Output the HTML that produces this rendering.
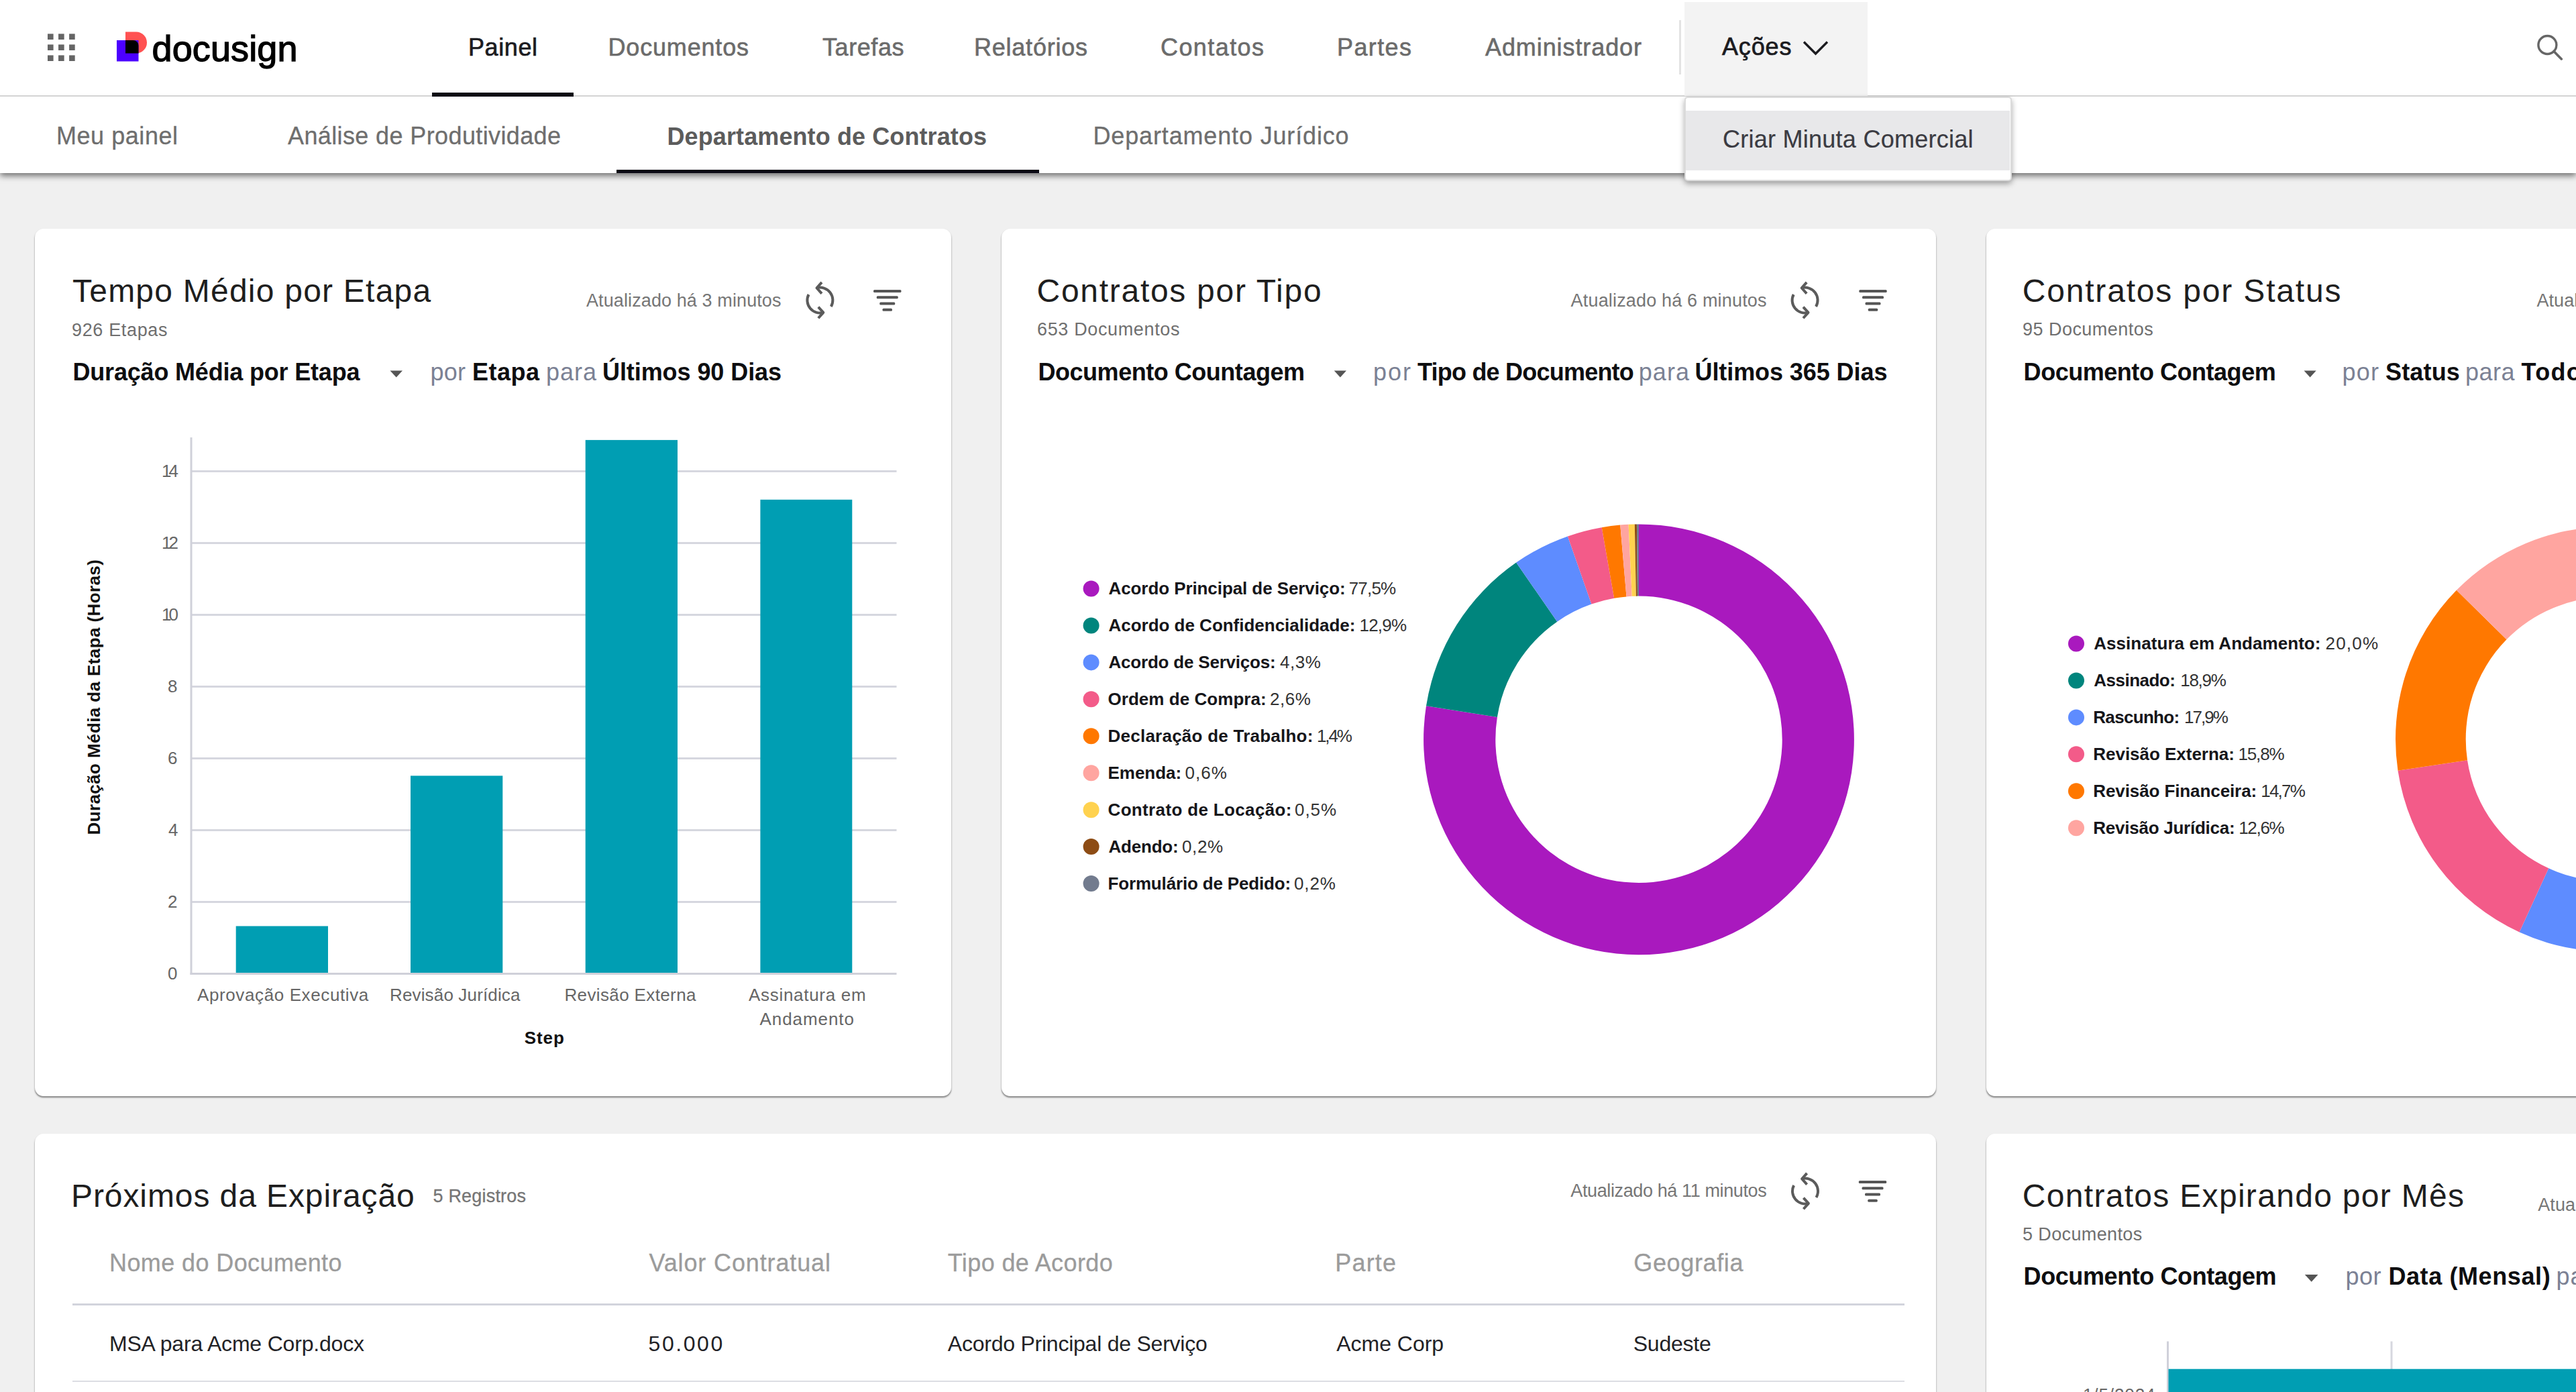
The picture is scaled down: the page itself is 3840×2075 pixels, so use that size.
<!DOCTYPE html>
<html><head><meta charset="utf-8"><title>Painel</title>
<style>
html,body{margin:0;padding:0;}
body{width:3840px;height:2075px;overflow:hidden;background:#f0f0f0;position:relative;font-family:"Liberation Sans",sans-serif;}
.t{position:absolute;white-space:nowrap;line-height:1;}
.abs{position:absolute;}
.card{position:absolute;background:#fff;border-radius:13px;box-shadow:0 2.5px 1.5px -0.5px rgba(0,0,0,.31),0 2px 2px 1px rgba(0,0,0,.13);}
</style></head><body>
<!-- top nav -->
<div class="abs" style="left:0;top:0;width:3840px;height:258px;background:#fff;box-shadow:0 4px 9px rgba(0,0,0,.55);"></div>
<div class="abs" style="left:0;top:142px;width:3840px;height:2px;background:#d4d4d4;"></div>
<div class="abs" style="left:2511px;top:3px;width:273px;height:139.5px;background:#f3f3f3;"></div>
<div class="abs" style="left:2503px;top:30px;width:3px;height:81px;background:#e3e3e3;"></div>
<div class="abs" style="left:644px;top:138px;width:211px;height:6px;background:#0a0914;"></div>
<div class="abs" style="left:919px;top:253px;width:629.5px;height:5px;background:#0a0914;"></div>
<!-- cards -->
<div class="card" style="left:52px;top:340.5px;width:1366px;height:1293px;"></div>
<div class="card" style="left:1492.5px;top:340.5px;width:1393.5px;height:1293px;"></div>
<div class="card" style="left:2960.5px;top:340.5px;width:1393.5px;height:1293px;"></div>
<div class="card" style="left:52px;top:1689.5px;width:2834px;height:600px;"></div>
<div class="card" style="left:2960.5px;top:1689.5px;width:1393.5px;height:600px;"></div>
<!-- dropdown -->
<div class="abs" style="left:2510.5px;top:143.5px;width:484px;height:122.5px;background:#fff;border:2.5px solid #dbdbdb;border-radius:5px;box-shadow:0 4px 8px rgba(0,0,0,.34);"></div>
<div class="abs" style="left:2513px;top:165px;width:483px;height:89px;background:#e8e8ea;"></div>
<!-- table lines -->
<div class="abs" style="left:108px;top:1943px;width:2731px;height:3px;background:#d2d4dc;"></div>
<div class="abs" style="left:108px;top:2058px;width:2731px;height:2px;background:#dcdde3;"></div>
<svg class="abs" style="left:0;top:0" width="3840" height="2075" viewBox="0 0 3840 2075">
<!-- app grid icon -->
<g fill="#656565"><rect x="71.00" y="50.40" width="8.6" height="8.6"/><rect x="71.00" y="66.40" width="8.6" height="8.6"/><rect x="71.00" y="82.40" width="8.6" height="8.6"/><rect x="87.05" y="50.40" width="8.6" height="8.6"/><rect x="87.05" y="66.40" width="8.6" height="8.6"/><rect x="87.05" y="82.40" width="8.6" height="8.6"/><rect x="103.10" y="50.40" width="8.6" height="8.6"/><rect x="103.10" y="66.40" width="8.6" height="8.6"/><rect x="103.10" y="82.40" width="8.6" height="8.6"/></g>
<!-- logo mark -->
<path d="M187,47.5H203A16,16 0 0 1 219,63.5V63.5A16,16 0 0 1 203,79.5H187Z" fill="#ff5252"/>
<rect x="174" y="60" width="32.5" height="31.5" fill="#4c00ff"/>
<path d="M187,60H198.5A8,8 0 0 1 206.5,68V79.5H187Z" fill="#000"/>
<!-- chevron -->
<path d="M2689,62.5L2706.5,80L2724,62.5" fill="none" stroke="#1b1b1f" stroke-width="3.4"/>
<!-- search -->
<circle cx="3797.4" cy="67" r="13.5" fill="none" stroke="#666" stroke-width="3.4"/><path d="M3807,76.6L3818.3,87.9" stroke="#666" stroke-width="3.6" stroke-linecap="round" fill="none"/>
<rect x="285" y="1343.0" width="1051.5" height="3" fill="#d6d7df"/><rect x="285" y="1236.0" width="1051.5" height="3" fill="#d6d7df"/><rect x="285" y="1129.0" width="1051.5" height="3" fill="#d6d7df"/><rect x="285" y="1022.0" width="1051.5" height="3" fill="#d6d7df"/><rect x="285" y="915.0" width="1051.5" height="3" fill="#d6d7df"/><rect x="285" y="808.0" width="1051.5" height="3" fill="#d6d7df"/><rect x="285" y="701.0" width="1051.5" height="3" fill="#d6d7df"/><rect x="283.5" y="652" width="3" height="801.0" fill="#d0d1da"/><rect x="283.5" y="1450.0" width="1053" height="3" fill="#cfd0d9"/><rect x="351.7" y="1380.5" width="137.3" height="69.5" fill="#009eb3"/><rect x="612" y="1156.4" width="137.3" height="293.6" fill="#009eb3"/><rect x="872.7" y="655.9" width="137.3" height="794.1" fill="#009eb3"/><rect x="1133.4" y="744.8" width="136.9" height="705.2" fill="#009eb3"/>
<path d="M2443.00,781.40A320.9,320.9 0 1 1 2126.01,1052.33L2231.91,1069.02A213.7,213.7 0 1 0 2443.00,888.60Z" fill="#a919be"/><path d="M2126.01,1052.33A320.9,320.9 0 0 1 2260.17,838.58L2321.25,926.68A213.7,213.7 0 0 0 2231.91,1069.02Z" fill="#00857d"/><path d="M2260.17,838.58A320.9,320.9 0 0 1 2336.96,799.43L2372.38,900.60A213.7,213.7 0 0 0 2321.25,926.68Z" fill="#5e8cff"/><path d="M2336.96,799.43A320.9,320.9 0 0 1 2387.70,786.20L2406.17,891.80A213.7,213.7 0 0 0 2372.38,900.60Z" fill="#f35b89"/><path d="M2387.70,786.20A320.9,320.9 0 0 1 2415.25,782.60L2424.52,889.40A213.7,213.7 0 0 0 2406.17,891.80Z" fill="#ff7800"/><path d="M2415.25,782.60A320.9,320.9 0 0 1 2427.57,781.77L2432.72,888.85A213.7,213.7 0 0 0 2424.52,889.40Z" fill="#ffa5a0"/><path d="M2427.57,781.77A320.9,320.9 0 0 1 2436.82,781.46L2438.89,888.64A213.7,213.7 0 0 0 2432.72,888.85Z" fill="#ffd24f"/><path d="M2436.82,781.46A320.9,320.9 0 0 1 2439.91,781.41L2440.94,888.61A213.7,213.7 0 0 0 2438.89,888.64Z" fill="#8d4c14"/><path d="M2439.91,781.41A320.9,320.9 0 0 1 2443.00,781.40L2443.00,888.60A213.7,213.7 0 0 0 2440.94,888.61Z" fill="#727b8e"/><circle cx="1626.6" cy="877.50" r="12" fill="#a919be"/><circle cx="1626.6" cy="932.44" r="12" fill="#00857d"/><circle cx="1626.6" cy="987.38" r="12" fill="#5e8cff"/><circle cx="1626.6" cy="1042.32" r="12" fill="#f35b89"/><circle cx="1626.6" cy="1097.26" r="12" fill="#ff7800"/><circle cx="1626.6" cy="1152.20" r="12" fill="#ffa5a0"/><circle cx="1626.6" cy="1207.14" r="12" fill="#ffd24f"/><circle cx="1626.6" cy="1262.08" r="12" fill="#8d4c14"/><circle cx="1626.6" cy="1317.02" r="12" fill="#727b8e"/>
<path d="M3887.50,785.30A316.5,316.5 0 0 1 4188.51,1004.00L4088.93,1036.35A211.8,211.8 0 0 0 3887.50,890.00Z" fill="#a919be"/><path d="M4188.51,1004.00A316.5,316.5 0 0 1 4090.05,1345.00L4023.05,1264.55A211.8,211.8 0 0 0 4088.93,1036.35Z" fill="#00857d"/><path d="M4090.05,1345.00A316.5,316.5 0 0 1 3755.59,1389.50L3799.23,1294.33A211.8,211.8 0 0 0 4023.05,1264.55Z" fill="#5e8cff"/><path d="M3755.59,1389.50A316.5,316.5 0 0 1 3574.50,1148.73L3678.04,1133.20A211.8,211.8 0 0 0 3799.23,1294.33Z" fill="#f35b89"/><path d="M3574.50,1148.73A316.5,316.5 0 0 1 3661.86,879.86L3736.50,953.28A211.8,211.8 0 0 0 3678.04,1133.20Z" fill="#ff7800"/><path d="M3661.86,879.86A316.5,316.5 0 0 1 3887.50,785.30L3887.50,890.00A211.8,211.8 0 0 0 3736.50,953.28Z" fill="#ffa5a0"/><circle cx="3095" cy="959.50" r="12" fill="#a919be"/><circle cx="3095" cy="1014.44" r="12" fill="#00857d"/><circle cx="3095" cy="1069.38" r="12" fill="#5e8cff"/><circle cx="3095" cy="1124.32" r="12" fill="#f35b89"/><circle cx="3095" cy="1179.26" r="12" fill="#ff7800"/><circle cx="3095" cy="1234.20" r="12" fill="#ffa5a0"/>
<rect x="3230" y="1999.5" width="3" height="100" fill="#d0d1da"/><rect x="3563.5" y="1999.5" width="3" height="100" fill="#d6d7df"/><rect x="3232.5" y="2040.7" width="700" height="60" fill="#009eb3"/>
<g fill="none" stroke="#5b5b5b" stroke-width="4" stroke-linecap="butt" stroke-linejoin="round"><path d="M1238.85,457.10A19,19 0 0 0 1217.48,429.25" /><path d="M1224.98,420.95L1217.48,429.25L1224.98,437.55"/><path d="M1205.47,438.97A19,19 0 0 0 1227.32,465.95" /><path d="M1219.82,457.65L1227.32,465.95L1219.82,474.25"/></g><rect x="1302.05" y="432.00" width="41.40" height="4" rx="1.5" fill="#555"/><rect x="1306.75" y="441.25" width="32.00" height="4" rx="1.5" fill="#555"/><rect x="1311.25" y="450.50" width="23.00" height="4" rx="1.5" fill="#555"/><rect x="1315.55" y="459.75" width="14.40" height="4" rx="1.5" fill="#555"/><g fill="none" stroke="#5b5b5b" stroke-width="4" stroke-linecap="butt" stroke-linejoin="round"><path d="M2707.05,457.10A19,19 0 0 0 2685.68,429.25" /><path d="M2693.18,420.95L2685.68,429.25L2693.18,437.55"/><path d="M2673.67,438.97A19,19 0 0 0 2695.52,465.95" /><path d="M2688.02,457.65L2695.52,465.95L2688.02,474.25"/></g><rect x="2771.30" y="432.00" width="41.40" height="4" rx="1.5" fill="#555"/><rect x="2776.00" y="441.25" width="32.00" height="4" rx="1.5" fill="#555"/><rect x="2780.50" y="450.50" width="23.00" height="4" rx="1.5" fill="#555"/><rect x="2784.80" y="459.75" width="14.40" height="4" rx="1.5" fill="#555"/><g fill="none" stroke="#5b5b5b" stroke-width="4" stroke-linecap="butt" stroke-linejoin="round"><path d="M2707.45,1785.10A19,19 0 0 0 2686.08,1757.25" /><path d="M2693.58,1748.95L2686.08,1757.25L2693.58,1765.55"/><path d="M2674.07,1766.97A19,19 0 0 0 2695.92,1793.95" /><path d="M2688.42,1785.65L2695.92,1793.95L2688.42,1802.25"/></g><rect x="2770.80" y="1759.90" width="41.40" height="4" rx="1.5" fill="#555"/><rect x="2775.50" y="1769.15" width="32.00" height="4" rx="1.5" fill="#555"/><rect x="2780.00" y="1778.40" width="23.00" height="4" rx="1.5" fill="#555"/><rect x="2784.30" y="1787.65" width="14.40" height="4" rx="1.5" fill="#555"/><path d="M581.5,552.5L600,552.5L590.75,562.5Z" fill="#555"/><path d="M1988.75,552.5L2007,552.5L1997.875,562.5Z" fill="#555"/><path d="M3434.5,552.5L3452.7,552.5L3443.6,562.5Z" fill="#555"/><path d="M3435.8,1900L3455.5,1900L3445.65,1910.8Z" fill="#555"/>
</svg>
<div class="t" style="left:0;top:0;font-size:26px;font-weight:700;color:#111;letter-spacing:0.4px;transform-origin:0 0;transform:translate(148.5px,1244.5px) rotate(-90deg);line-height:1;"><span style="position:relative;top:-22px;">Duração Média da Etapa (Horas)</span></div>
<div class="t" style="left:226.50px;top:45.29px;font-size:54px;font-weight:400;color:#000;letter-spacing:0.125px;-webkit-text-stroke:1.35px #000;">docusign</div><div class="t" style="left:698.00px;top:52.53px;font-size:36px;font-weight:400;color:#1b1b1f;letter-spacing:0.585px;-webkit-text-stroke:0.7px #1b1b1f;">Painel</div><div class="t" style="left:906.50px;top:52.53px;font-size:36px;font-weight:400;color:#6b6b6b;letter-spacing:0.823px;-webkit-text-stroke:0.6px #6b6b6b;">Documentos</div><div class="t" style="left:1226.00px;top:52.53px;font-size:36px;font-weight:400;color:#6b6b6b;letter-spacing:0.574px;-webkit-text-stroke:0.6px #6b6b6b;">Tarefas</div><div class="t" style="left:1452.00px;top:52.53px;font-size:36px;font-weight:400;color:#6b6b6b;letter-spacing:0.770px;-webkit-text-stroke:0.6px #6b6b6b;">Relatórios</div><div class="t" style="left:1730.00px;top:52.53px;font-size:36px;font-weight:400;color:#6b6b6b;letter-spacing:1.416px;-webkit-text-stroke:0.6px #6b6b6b;">Contatos</div><div class="t" style="left:1993.00px;top:52.53px;font-size:36px;font-weight:400;color:#6b6b6b;letter-spacing:1.391px;-webkit-text-stroke:0.6px #6b6b6b;">Partes</div><div class="t" style="left:2214.00px;top:52.53px;font-size:36px;font-weight:400;color:#6b6b6b;letter-spacing:0.909px;-webkit-text-stroke:0.6px #6b6b6b;">Administrador</div><div class="t" style="left:2567.00px;top:51.53px;font-size:36px;font-weight:400;color:#1b1b1f;letter-spacing:0.861px;-webkit-text-stroke:0.7px #1b1b1f;">Ações</div><div class="t" style="left:84.00px;top:184.53px;font-size:36px;font-weight:400;color:#6e6e6e;letter-spacing:0.543px;-webkit-text-stroke:0.3px #6e6e6e;">Meu painel</div><div class="t" style="left:429.00px;top:184.53px;font-size:36px;font-weight:400;color:#6e6e6e;letter-spacing:0.381px;-webkit-text-stroke:0.3px #6e6e6e;">Análise de Produtividade</div><div class="t" style="left:994.50px;top:185.53px;font-size:36px;font-weight:700;color:#5c5c5c;letter-spacing:0.102px;">Departamento de Contratos</div><div class="t" style="left:1629.50px;top:184.53px;font-size:36px;font-weight:400;color:#6e6e6e;letter-spacing:0.847px;-webkit-text-stroke:0.3px #6e6e6e;">Departamento Jurídico</div><div class="t" style="left:2568.00px;top:190.03px;font-size:36px;font-weight:400;color:#3b3b42;letter-spacing:0.258px;-webkit-text-stroke:0.2px #3b3b42;">Criar Minuta Comercial</div><div class="t" style="left:108.00px;top:410.37px;font-size:48px;font-weight:400;color:#1e1e1e;letter-spacing:1.229px;">Tempo Médio por Etapa</div><div class="t" style="left:107.00px;top:478.64px;font-size:27px;font-weight:400;color:#6f6f6f;letter-spacing:0.655px;">926 Etapas</div><div class="t" style="left:108.50px;top:537.03px;font-size:36px;font-weight:700;color:#0e0e10;letter-spacing:-0.186px;">Duração Média por Etapa</div><div class="t" style="left:641.50px;top:536.53px;font-size:36px;font-weight:400;color:#7b8194;letter-spacing:0.229px;">por</div><div class="t" style="left:704.00px;top:537.03px;font-size:36px;font-weight:700;color:#0e0e10;letter-spacing:0.497px;">Etapa</div><div class="t" style="left:814.00px;top:536.53px;font-size:36px;font-weight:400;color:#7b8194;letter-spacing:0.990px;">para</div><div class="t" style="left:898.00px;top:537.03px;font-size:36px;font-weight:700;color:#0e0e10;letter-spacing:-0.077px;">Últimos 90 Dias</div><div class="t" style="left:874.00px;top:435.14px;font-size:27px;font-weight:400;color:#767676;letter-spacing:0.105px;">Atualizado há 3 minutos</div><div class="t" style="left:1545.50px;top:410.37px;font-size:48px;font-weight:400;color:#1e1e1e;letter-spacing:1.718px;">Contratos por Tipo</div><div class="t" style="left:1546.00px;top:478.14px;font-size:27px;font-weight:400;color:#6f6f6f;letter-spacing:0.644px;">653 Documentos</div><div class="t" style="left:1547.50px;top:537.03px;font-size:36px;font-weight:700;color:#0e0e10;letter-spacing:-0.472px;">Documento Countagem</div><div class="t" style="left:2047.00px;top:536.53px;font-size:36px;font-weight:400;color:#7b8194;letter-spacing:1.979px;">por</div><div class="t" style="left:2113.00px;top:537.03px;font-size:36px;font-weight:700;color:#0e0e10;letter-spacing:-0.784px;">Tipo de Documento</div><div class="t" style="left:2442.70px;top:536.53px;font-size:36px;font-weight:400;color:#7b8194;letter-spacing:1.090px;">para</div><div class="t" style="left:2526.50px;top:537.03px;font-size:36px;font-weight:700;color:#0e0e10;letter-spacing:-0.080px;">Últimos 365 Dias</div><div class="t" style="left:2341.60px;top:435.14px;font-size:27px;font-weight:400;color:#767676;letter-spacing:0.169px;">Atualizado há 6 minutos</div><div class="t" style="left:3014.70px;top:410.37px;font-size:48px;font-weight:400;color:#1e1e1e;letter-spacing:1.820px;">Contratos por Status</div><div class="t" style="left:3015.00px;top:478.14px;font-size:27px;font-weight:400;color:#6f6f6f;letter-spacing:0.466px;">95 Documentos</div><div class="t" style="left:3016.60px;top:537.03px;font-size:36px;font-weight:700;color:#0e0e10;letter-spacing:-0.465px;">Documento Contagem</div><div class="t" style="left:3491.40px;top:536.53px;font-size:36px;font-weight:400;color:#7b8194;letter-spacing:1.279px;">por</div><div class="t" style="left:3556.00px;top:537.03px;font-size:36px;font-weight:700;color:#0e0e10;letter-spacing:0.160px;">Status</div><div class="t" style="left:3675.00px;top:536.53px;font-size:36px;font-weight:400;color:#7b8194;letter-spacing:0.490px;">para</div><div class="t" style="left:3758.60px;top:537.03px;font-size:36px;font-weight:700;color:#0e0e10;letter-spacing:1.278px;">Todos</div><div class="t" style="left:3781.40px;top:435.14px;font-size:27px;font-weight:400;color:#767676;letter-spacing:0.105px;">Atualizado há 4 minutos</div><div class="t" style="left:106.00px;top:1758.87px;font-size:48px;font-weight:400;color:#1e1e1e;letter-spacing:0.907px;">Próximos da Expiração</div><div class="t" style="left:645.50px;top:1769.64px;font-size:27px;font-weight:400;color:#757575;letter-spacing:0.194px;-webkit-text-stroke:0.3px #757575;">5 Registros</div><div class="t" style="left:2341.25px;top:1762.14px;font-size:27px;font-weight:400;color:#767676;letter-spacing:-0.378px;">Atualizado há 11 minutos</div><div class="t" style="left:163.00px;top:1865.03px;font-size:36px;font-weight:400;color:#9b9b9b;letter-spacing:0.397px;-webkit-text-stroke:0.3px #9b9b9b;">Nome do Documento</div><div class="t" style="left:967.50px;top:1865.03px;font-size:36px;font-weight:400;color:#9b9b9b;letter-spacing:0.869px;-webkit-text-stroke:0.3px #9b9b9b;">Valor Contratual</div><div class="t" style="left:1412.80px;top:1865.03px;font-size:36px;font-weight:400;color:#9b9b9b;letter-spacing:0.393px;-webkit-text-stroke:0.3px #9b9b9b;">Tipo de Acordo</div><div class="t" style="left:1990.30px;top:1865.03px;font-size:36px;font-weight:400;color:#9b9b9b;letter-spacing:1.169px;-webkit-text-stroke:0.3px #9b9b9b;">Parte</div><div class="t" style="left:2435.25px;top:1865.03px;font-size:36px;font-weight:400;color:#9b9b9b;letter-spacing:0.647px;-webkit-text-stroke:0.3px #9b9b9b;">Geografia</div><div class="t" style="left:163.00px;top:1987.41px;font-size:32px;font-weight:400;color:#222226;letter-spacing:-0.191px;">MSA para Acme Corp.docx</div><div class="t" style="left:966.50px;top:1987.41px;font-size:32px;font-weight:400;color:#222226;letter-spacing:2.584px;">50.000</div><div class="t" style="left:1412.80px;top:1987.41px;font-size:32px;font-weight:400;color:#222226;letter-spacing:-0.234px;">Acordo Principal de Serviço</div><div class="t" style="left:1992.30px;top:1987.41px;font-size:32px;font-weight:400;color:#222226;letter-spacing:-0.031px;">Acme Corp</div><div class="t" style="left:2434.75px;top:1987.41px;font-size:32px;font-weight:400;color:#222226;letter-spacing:-0.229px;">Sudeste</div><div class="t" style="left:3014.80px;top:1758.87px;font-size:48px;font-weight:400;color:#1e1e1e;letter-spacing:1.304px;">Contratos Expirando por Mês</div><div class="t" style="left:3015.00px;top:1826.64px;font-size:27px;font-weight:400;color:#6f6f6f;letter-spacing:0.374px;">5 Documentos</div><div class="t" style="left:3016.60px;top:1885.03px;font-size:36px;font-weight:700;color:#0e0e10;letter-spacing:-0.412px;">Documento Contagem</div><div class="t" style="left:3496.50px;top:1884.53px;font-size:36px;font-weight:400;color:#7b8194;letter-spacing:0.529px;">por</div><div class="t" style="left:3560.40px;top:1885.03px;font-size:36px;font-weight:700;color:#0e0e10;letter-spacing:0.603px;">Data (Mensal)</div><div class="t" style="left:3810.40px;top:1884.53px;font-size:36px;font-weight:400;color:#7b8194;letter-spacing:0.990px;">para</div><div class="t" style="left:3783.20px;top:1782.64px;font-size:27px;font-weight:400;color:#767676;letter-spacing:0.105px;">Atualizado há 4 minutos</div><div class="t" style="left:3105.00px;top:2065.89px;font-size:26px;font-weight:400;color:#666;letter-spacing:0.893px;">1/5/2024</div><div class="t" style="left:250.00px;top:1438.49px;font-size:26px;font-weight:400;color:#666;letter-spacing:0.000px;">0</div><div class="t" style="left:250.00px;top:1331.49px;font-size:26px;font-weight:400;color:#666;letter-spacing:0.000px;">2</div><div class="t" style="left:251.00px;top:1224.49px;font-size:26px;font-weight:400;color:#666;letter-spacing:0.000px;">4</div><div class="t" style="left:250.00px;top:1117.49px;font-size:26px;font-weight:400;color:#666;letter-spacing:0.000px;">6</div><div class="t" style="left:250.00px;top:1010.49px;font-size:26px;font-weight:400;color:#666;letter-spacing:0.000px;">8</div><div class="t" style="left:241.00px;top:903.49px;font-size:26px;font-weight:400;color:#666;letter-spacing:-3.960px;">10</div><div class="t" style="left:241.00px;top:796.49px;font-size:26px;font-weight:400;color:#666;letter-spacing:-3.960px;">12</div><div class="t" style="left:241.00px;top:689.49px;font-size:26px;font-weight:400;color:#666;letter-spacing:-3.960px;">14</div><div class="t" style="left:294.00px;top:1470.49px;font-size:26px;font-weight:400;color:#666;letter-spacing:0.612px;">Aprovação Executiva</div><div class="t" style="left:581.00px;top:1470.49px;font-size:26px;font-weight:400;color:#666;letter-spacing:0.151px;">Revisão Jurídica</div><div class="t" style="left:841.40px;top:1470.49px;font-size:26px;font-weight:400;color:#666;letter-spacing:0.379px;">Revisão Externa</div><div class="t" style="left:1116.00px;top:1470.49px;font-size:26px;font-weight:400;color:#666;letter-spacing:0.706px;">Assinatura em</div><div class="t" style="left:1132.50px;top:1506.49px;font-size:26px;font-weight:400;color:#666;letter-spacing:0.935px;">Andamento</div><div class="t" style="left:781.70px;top:1534.49px;font-size:26px;font-weight:700;color:#111;letter-spacing:0.947px;">Step</div><div class="t" style="left:1652.50px;top:864.39px;font-size:26px;font-weight:700;color:#16161a;letter-spacing:-0.084px;">Acordo Principal de Serviço:</div><div class="t" style="left:2010.75px;top:864.39px;font-size:26px;font-weight:400;color:#333;letter-spacing:-0.838px;">77,5%</div><div class="t" style="left:1652.50px;top:919.33px;font-size:26px;font-weight:700;color:#16161a;letter-spacing:-0.017px;">Acordo de Confidencialidade:</div><div class="t" style="left:2026.50px;top:919.33px;font-size:26px;font-weight:400;color:#333;letter-spacing:-0.776px;">12,9%</div><div class="t" style="left:1652.50px;top:974.27px;font-size:26px;font-weight:700;color:#16161a;letter-spacing:-0.205px;">Acordo de Serviços:</div><div class="t" style="left:1908.00px;top:974.27px;font-size:26px;font-weight:400;color:#333;letter-spacing:0.535px;">4,3%</div><div class="t" style="left:1651.50px;top:1029.21px;font-size:26px;font-weight:700;color:#16161a;letter-spacing:0.045px;">Ordem de Compra:</div><div class="t" style="left:1893.00px;top:1029.21px;font-size:26px;font-weight:400;color:#333;letter-spacing:0.535px;">2,6%</div><div class="t" style="left:1651.50px;top:1084.15px;font-size:26px;font-weight:700;color:#16161a;letter-spacing:0.243px;">Declaração de Trabalho:</div><div class="t" style="left:1963.00px;top:1084.15px;font-size:26px;font-weight:400;color:#333;letter-spacing:-2.131px;">1,4%</div><div class="t" style="left:1651.50px;top:1139.09px;font-size:26px;font-weight:700;color:#16161a;letter-spacing:-0.024px;">Emenda:</div><div class="t" style="left:1766.50px;top:1139.09px;font-size:26px;font-weight:400;color:#333;letter-spacing:1.035px;">0,6%</div><div class="t" style="left:1651.50px;top:1194.03px;font-size:26px;font-weight:700;color:#16161a;letter-spacing:0.350px;">Contrato de Locação:</div><div class="t" style="left:1930.00px;top:1194.03px;font-size:26px;font-weight:400;color:#333;letter-spacing:0.952px;">0,5%</div><div class="t" style="left:1652.50px;top:1248.97px;font-size:26px;font-weight:700;color:#16161a;letter-spacing:-0.211px;">Adendo:</div><div class="t" style="left:1762.00px;top:1248.97px;font-size:26px;font-weight:400;color:#333;letter-spacing:0.619px;">0,2%</div><div class="t" style="left:1651.50px;top:1303.91px;font-size:26px;font-weight:700;color:#16161a;letter-spacing:-0.162px;">Formulário de Pedido:</div><div class="t" style="left:1929.00px;top:1303.91px;font-size:26px;font-weight:400;color:#333;letter-spacing:0.869px;">0,2%</div><div class="t" style="left:3121.25px;top:946.39px;font-size:26px;font-weight:700;color:#16161a;letter-spacing:0.048px;">Assinatura em Andamento:</div><div class="t" style="left:3466.50px;top:946.39px;font-size:26px;font-weight:400;color:#333;letter-spacing:1.224px;">20,0%</div><div class="t" style="left:3121.25px;top:1001.33px;font-size:26px;font-weight:700;color:#16161a;letter-spacing:-0.503px;">Assinado:</div><div class="t" style="left:3250.25px;top:1001.33px;font-size:26px;font-weight:400;color:#333;letter-spacing:-1.276px;">18,9%</div><div class="t" style="left:3120.25px;top:1056.27px;font-size:26px;font-weight:700;color:#16161a;letter-spacing:-0.679px;">Rascunho:</div><div class="t" style="left:3256.00px;top:1056.27px;font-size:26px;font-weight:400;color:#333;letter-spacing:-1.963px;">17,9%</div><div class="t" style="left:3120.25px;top:1111.21px;font-size:26px;font-weight:700;color:#16161a;letter-spacing:-0.022px;">Revisão Externa:</div><div class="t" style="left:3336.50px;top:1111.21px;font-size:26px;font-weight:400;color:#333;letter-spacing:-1.151px;">15,8%</div><div class="t" style="left:3120.25px;top:1166.15px;font-size:26px;font-weight:700;color:#16161a;letter-spacing:-0.097px;">Revisão Financeira:</div><div class="t" style="left:3370.25px;top:1166.15px;font-size:26px;font-weight:400;color:#333;letter-spacing:-1.776px;">14,7%</div><div class="t" style="left:3120.25px;top:1221.09px;font-size:26px;font-weight:700;color:#16161a;letter-spacing:-0.244px;">Revisão Jurídica:</div><div class="t" style="left:3337.25px;top:1221.09px;font-size:26px;font-weight:400;color:#333;letter-spacing:-1.338px;">12,6%</div>
</body></html>
